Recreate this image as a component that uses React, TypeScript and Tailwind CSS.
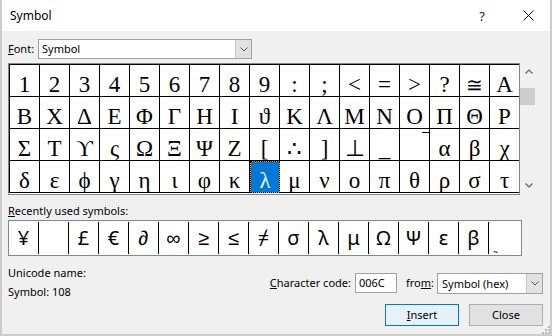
import React from "react";

const rows: string[][] = [
  ["1", "2", "3", "4", "5", "6", "7", "8", "9", ":", ";", "<", "=", ">", "?", "≅", "Α"],
  ["Β", "Χ", "Δ", "Ε", "Φ", "Γ", "Η", "Ι", "ϑ", "Κ", "Λ", "Μ", "Ν", "Ο", "Π", "Θ", "Ρ"],
  ["Σ", "Τ", "ϒ", "ς", "Ω", "Ξ", "Ψ", "Ζ", "[", "∴", "]", "⊥", "_", "", "α", "β", "χ"],
  ["δ", "ε", "ϕ", "γ", "η", "ι", "φ", "κ", "λ", "μ", "ν", "ο", "π", "θ", "ρ", "σ", "τ"],
];

const recent = ["¥", "", "£", "€", "∂", "∞", "≥", "≤", "≠", "σ", "λ", "μ", "Ω", "Ψ", "ε", "β", "~"];

function Chevron({ up = false }: { up?: boolean }) {
  return (
    <svg width="8" height="5" viewBox="0 0 8 5">
      <polyline
        points={up ? "0.5,4.5 4,1 7.5,4.5" : "0.5,0.5 4,4 7.5,0.5"}
        fill="none"
        stroke="#606060"
        strokeWidth="1.2"
      />
    </svg>
  );
}

function DropButton() {
  return (
    <div className="w-[16px] h-full bg-[#e1e1e1] border-l border-[#c8c8c8] flex items-center justify-center">
      <svg width="8" height="5" viewBox="0 0 8 5">
        <polyline points="0.5,0.5 4,4 7.5,0.5" fill="none" stroke="#555555" strokeWidth="1" />
      </svg>
    </div>
  );
}

export default function App() {
  return (
    <div className="relative w-[552px] h-[336px] overflow-hidden bg-[#f0f0f0] border-x-2 border-b-2 border-[#cccccc] flex flex-col font-['Noto_Sans',sans-serif] text-[11px] leading-[16px] text-black">
      {/* Title bar */}
      <div className="h-[31px] bg-white flex items-center pl-[8px]">
        <span className="flex-1 text-[12px]">Symbol</span>
        <span className="text-[13px] text-[#222] mr-[38px]">?</span>
        <svg width="11" height="11" viewBox="0 0 11 11" className="mr-[16px]">
          <line x1="0.5" y1="0.5" x2="10.5" y2="10.5" stroke="#111" strokeWidth="1" />
          <line x1="10.5" y1="0.5" x2="0.5" y2="10.5" stroke="#111" strokeWidth="1" />
        </svg>
      </div>

      {/* Font row */}
      <div className="flex items-center mt-[8px] pl-[6px] h-[20px]">
        <span className="w-[30px]">
          <span className="underline">F</span>ont:
        </span>
        <div className="w-[214px] h-[20px] bg-white border border-[#a0a0a0] flex items-stretch">
          <span className="flex-1 pl-[3px] leading-[18px]">Symbol</span>
          <DropButton />
        </div>
      </div>

      {/* Symbol grid + scrollbar */}
      <div className="flex mt-[4px] pl-[6px]">
        <div className="border border-[#828790] bg-white pb-[1px]">
          <div className="grid grid-cols-[repeat(16,30px)_29px] border-l border-t border-black">
            {rows.map((row, r) =>
              row.map((ch, c) => {
                const selected = r === 3 && c === 8;
                const last = c === 16;
                const small = ch === "≅";
                if (selected) {
                  return (
                    <div key={`${r}-${c}`} className="h-[32px] bg-[#f39c3c]">
                      <div className="w-full h-full border border-dotted border-black bg-[#0078d7] bg-clip-padding text-center text-white font-['Liberation_Serif',serif] text-[23px] leading-[37px] overflow-visible">
                        {ch}
                      </div>
                    </div>
                  );
                }
                return (
                  <div
                    key={`${r}-${c}`}
                    className={`relative h-[32px] border-b border-black text-center font-['Liberation_Serif',serif] ${small ? "text-[20px] leading-[40px]" : "text-[23px] leading-[39px]"} ${last ? "" : "border-r"}`}
                  >
                    {ch}
                    {r === 2 && c === 13 && (
                      <div className="absolute right-0 top-[3px] w-[7px] h-[1px] bg-black" />
                    )}
                  </div>
                );
              })
            )}
          </div>
        </div>
        <div className="w-[17px] flex flex-col pb-[1px]">
          <div className="h-[17px] flex items-center justify-center">
            <Chevron up />
          </div>
          <div className="h-[17px] w-[15px] mt-[8px] bg-[#cdcdcd]" />
          <div className="flex-1" />
          <div className="h-[17px] flex items-center justify-center">
            <Chevron />
          </div>
        </div>
      </div>

      {/* Recently used */}
      <div className="mt-[8px] pl-[6px]">
        <span className="underline">R</span>ecently used symbols:
      </div>
      <div className="mt-[1px] ml-[6px] w-fit flex border border-[#828790] bg-white py-[1px]">
        {recent.map((ch, i) => {
          const last = i === recent.length - 1;
          if (last) {
            return (
              <div key={i} className="relative w-[32px] h-[32px]">
                <span className="absolute left-[4px] bottom-[-2px] text-[9px] leading-[9px]">~</span>
              </div>
            );
          }
          return (
            <div
              key={i}
              className="w-[30px] h-[32px] border-r border-black flex items-center justify-center font-['Noto_Sans',sans-serif] text-[20px] leading-[32px]"
            >
              {ch}
            </div>
          );
        })}
      </div>

      {/* Bottom area */}
      <div className="flex justify-between pl-[6px] pr-[7px]">
        <div className="flex flex-col pt-[9px]">
          <span>Unicode name:</span>
          <span className="mt-[3px]">Symbol: 108</span>
        </div>
        <div className="flex flex-col items-end">
          <div className="flex items-center mt-[17px] h-[20px]">
            <span>
              <span className="underline">C</span>haracter code:
            </span>
            <div className="ml-[4px] w-[42px] h-[20px] bg-white border border-[#a0a0a0] pl-[3px] leading-[18px]">
              006C
            </div>
            <span className="ml-[9px]">
              fro<span className="underline">m</span>:
            </span>
            <div className="ml-[3px] w-[106px] h-[21px] bg-white border border-[#a0a0a0] flex items-stretch">
              <span className="flex-1 pl-[4px] leading-[19px]">Symbol (hex)</span>
              <DropButton />
            </div>
          </div>
          <div className="flex mt-[11px] gap-[10px]">
            <div className="w-[74px] h-[22px] border border-[#0078d7] bg-[#e5f1fb] flex items-center justify-center">
              <span>
                <span className="underline">I</span>nsert
              </span>
            </div>
            <div className="w-[74px] h-[22px] border border-[#adadad] bg-[#e1e1e1] flex items-center justify-center">
              Close
            </div>
          </div>
        </div>
      </div>

      {/* Resize grip */}
      <svg width="10" height="10" viewBox="0 0 10 10" className="absolute right-[0px] bottom-[0px]">
        {[
          [8, 2],
          [8, 5],
          [5, 5],
          [8, 8],
          [5, 8],
          [2, 8],
        ].map(([x, y], i) => (
          <rect key={i} x={x} y={y} width="2" height="2" fill="#b8b8b8" />
        ))}
      </svg>
    </div>
  );
}
